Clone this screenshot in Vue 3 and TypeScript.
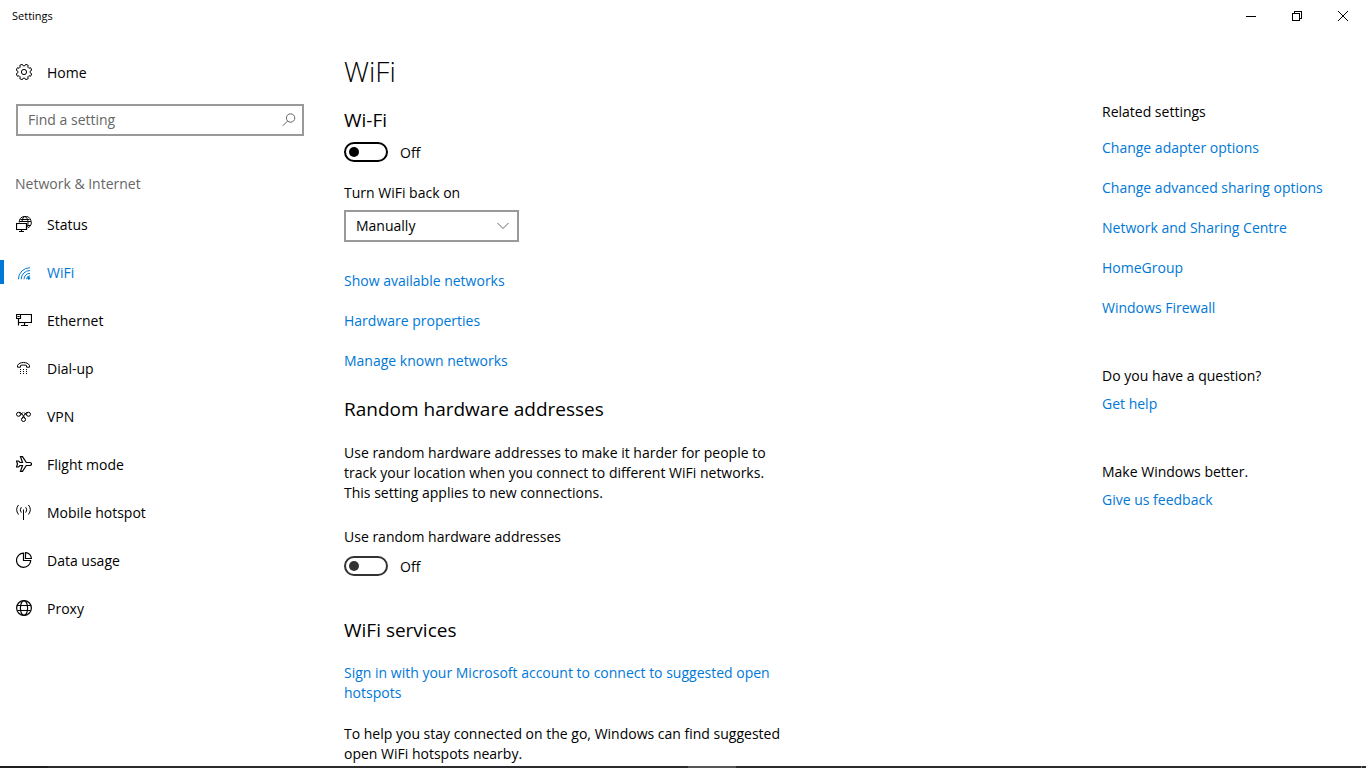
<script setup lang="ts">
import { ref } from 'vue'

interface NavItem {
  id: string
  label: string
}

const navItems: NavItem[] = [
  { id: 'status', label: 'Status' },
  { id: 'wifi', label: 'WiFi' },
  { id: 'ethernet', label: 'Ethernet' },
  { id: 'dialup', label: 'Dial-up' },
  { id: 'vpn', label: 'VPN' },
  { id: 'flight', label: 'Flight mode' },
  { id: 'hotspot', label: 'Mobile hotspot' },
  { id: 'data', label: 'Data usage' },
  { id: 'proxy', label: 'Proxy' },
]

const networkLinks: string[] = ['Show available networks', 'Hardware properties', 'Manage known networks']
const relatedLinks: string[] = [
  'Change adapter options',
  'Change advanced sharing options',
  'Network and Sharing Centre',
  'HomeGroup',
  'Windows Firewall',
]

const active = ref('wifi')
const query = ref('')
const wifiOn = ref(false)
const randomOn = ref(false)
const turnOn = ref('Manually')

// Scalloped outline of the gear, eight teeth around (8, 8)
const gearPoints: string = Array.from({ length: 8 }, (_, i) => {
  const at = (r: number, deg: number) => {
    const a = ((i * 45 + deg + 22.5) * Math.PI) / 180
    return `${(8 + r * Math.cos(a)).toFixed(2)},${(8 + r * Math.sin(a)).toFixed(2)}`
  }
  return [at(7.9, -10), at(7.9, 10), at(6.2, 15), at(6.2, 30)].join(' ')
}).join(' ')
</script>

<template>
  <div class="window">
    <header class="titlebar">
      <span class="title">Settings</span>
      <div class="controls">
        <button type="button" aria-label="Minimise">
          <svg width="10" height="10" viewBox="0 0 10 10" shape-rendering="crispEdges"><path d="M0 5.5H10" /></svg>
        </button>
        <button type="button" aria-label="Restore">
          <svg width="10" height="10" viewBox="0 0 10 10" shape-rendering="crispEdges"><path d="M.5 2.5H7.5V9.5H.5ZM2.5 2.5V.5H9.5V7.5H7.5" /></svg>
        </button>
        <button type="button" aria-label="Close">
          <svg width="10" height="10" viewBox="0 0 10 10"><path d="M0 0 10 10M10 0 0 10" /></svg>
        </button>
      </div>
    </header>

    <div class="body">
      <aside class="sidebar">
        <a class="item" href="#home">
          <svg class="icon" viewBox="0 0 16 16"><polygon :points="gearPoints" stroke-linejoin="round" /><circle cx="8" cy="8" r="2.6" /></svg>
          <span>Home</span>
        </a>
        <div class="search">
          <input v-model="query" type="text" placeholder="Find a setting" aria-label="Find a setting" />
          <svg width="14" height="14" viewBox="0 0 14 14"><circle cx="8.6" cy="5" r="4.2" /><path d="M5.6 8 .8 12.8" /></svg>
        </div>
        <h2 class="group">Network &amp; Internet</h2>
        <nav>
          <a
            v-for="item in navItems"
            :key="item.id"
            class="item"
            :class="{ active: item.id === active }"
            :href="'#' + item.id"
            @click.prevent="active = item.id"
          >
            <svg class="icon" viewBox="0 0 16 16">
              <g v-if="item.id === 'status'">
                <path d="M3.2 6.5A6 6 0 1 1 11.6 11.9M4.5 3.5H13.5M4 5.5H14.8M11.5 9.5H14M6 5.5C6.3 3 7.3.6 8.9.6S12 3.5 12 6.5 11.6 9.6 11.2 11" />
                <path stroke-width="1.2" d="M.5 7.5H10.5V13.5H.5ZM5.5 13.5V15.5M3 15.5H8" />
              </g>
              <g v-else-if="item.id === 'wifi'">
                <path d="M2.4 15.3A11.6 11.6 0 0 1 14 3.7M5.2 15.3A8.8 8.8 0 0 1 14 6.5M8 15.3A6 6 0 0 1 14 9.3M10.6 15.3A3.4 3.4 0 0 1 14 11.9" />
                <circle class="solid" cx="12.8" cy="14.3" r="1" />
              </g>
              <g v-else-if="item.id === 'ethernet'" stroke-width="1.2">
                <path d="M4.5 2.5H15.5V10.5H2.5M8.5 10.5V13.5M5 13.5H12M.5 2.5H4.5V6.5H.5ZM2.5 6.5V13.5M1.5 4.5H3.5" />
              </g>
              <g v-else-if="item.id === 'dialup'">
                <path d="M1.5 7.2V5.5C2.5 3.3 5 2.5 7.5 2.5S12.5 3.3 13.5 5.5V7.2H10.5V5.5C9 4.9 6 4.9 4.5 5.5V7.2Z" />
                <path class="solid flat" d="M4 9h1v1h-1zM7 9h1v1h-1zM10 9h1v1h-1zM4 11h1v1h-1zM7 11h1v1h-1zM10 11h1v1h-1zM4 13h1v1h-1zM7 13h1v1h-1zM10 13h1v1h-1z" />
              </g>
              <g v-else-if="item.id === 'vpn'">
                <circle cx="2.5" cy="6.3" r="2" /><circle cx="12.5" cy="6.3" r="2" /><circle cx="7.5" cy="11.5" r="2" />
                <path d="M3 4.3Q5 4.3 6 6L9.2 10.5M12 4.3Q10 4.3 9 6L5.8 10.5M4.2 7.5 6.8 4.5M10.8 7.5 8.2 4.5" />
              </g>
              <g v-else-if="item.id === 'flight'" stroke-width="1.2">
                <path d="M.5 5H2.5L4 6.5H6.5L4.5.7H6.5L10.3 6.5H14Q15.5 6.7 15.5 8T14 9.5H10.3L6.5 15.3H4.5L6.5 9.5H4L2.5 11H.5L1.5 8Z" />
              </g>
              <g v-else-if="item.id === 'hotspot'">
                <path d="M7.5 5.5V16M5.3 3.2Q3.2 5.8 5.3 8.6M9.7 3.2Q11.8 5.8 9.7 8.6M2.5 1Q-1.2 5.5 2.5 10.5M12.5 1Q16.2 5.5 12.5 10.5" />
              </g>
              <g v-else-if="item.id === 'data'" stroke-width="1.2">
                <path d="M7.5 1.2A7.1 7.1 0 1 0 14.7 8.5H7.5ZM9.5.6V6.5H15.4A6 6 0 0 0 9.5.6Z" />
              </g>
              <g v-else stroke-width="1.2">
                <circle cx="8" cy="8" r="7.4" /><ellipse cx="8" cy="8" rx="3.6" ry="7.4" />
                <path d="M1.5 5.5H14.5M1.5 10.5H14.5" />
              </g>
            </svg>
            <span>{{ item.label }}</span>
          </a>
        </nav>
      </aside>

      <main class="content">
        <h1>WiFi</h1>
        <h2 class="first">Wi-Fi</h2>
        <label class="toggle">
          <input v-model="wifiOn" type="checkbox" aria-label="Wi-Fi" />
          <span>{{ wifiOn ? 'On' : 'Off' }}</span>
        </label>
        <label class="caption" for="turn-on">Turn WiFi back on</label>
        <div class="select">
          <select id="turn-on" v-model="turnOn">
            <option>Manually</option>
            <option>In 1 hour</option>
            <option>In 4 hours</option>
            <option>In 1 day</option>
          </select>
          <svg width="12" height="8" viewBox="0 0 12 8"><path d="M.5 1 6 6.5 11.5 1" /></svg>
        </div>
        <ul class="links">
          <li v-for="link in networkLinks" :key="link"><a href="#">{{ link }}</a></li>
        </ul>
        <h2>Random hardware addresses</h2>
        <p class="text">
          Use random hardware addresses to make it harder for people to track your location when you connect to
          different WiFi networks. This setting applies to new connections.
        </p>
        <label class="caption" for="random-toggle">Use random hardware addresses</label>
        <label class="toggle soft">
          <input id="random-toggle" v-model="randomOn" type="checkbox" />
          <span>{{ randomOn ? 'On' : 'Off' }}</span>
        </label>
        <h2 class="services">WiFi services</h2>
        <p class="signin"><a href="#">Sign in with your Microsoft account to connect to suggested open hotspots</a></p>
        <p class="text">
          To help you stay connected on the go, Windows can find suggested open WiFi hotspots nearby.
        </p>
      </main>

      <aside class="related">
        <h3>Related settings</h3>
        <ul class="links">
          <li v-for="link in relatedLinks" :key="link"><a href="#">{{ link }}</a></li>
        </ul>
        <h3>Do you have a question?</h3>
        <p><a href="#">Get help</a></p>
        <h3>Make Windows better.</h3>
        <p><a href="#">Give us feedback</a></p>
      </aside>
    </div>

    <footer class="edge"><i class="start"></i><i class="running"></i><i class="desk"></i></footer>
  </div>
</template>

<style>
body {
  margin: 0;
  overflow: hidden;
}
</style>

<style scoped>
.window {
  display: flex;
  flex-direction: column;
  height: 100vh;
  overflow: hidden;
  background: #fff;
  color: #000;
  font: 14px/20px "Segoe UI", "Open Sans", "Noto Sans", sans-serif;
}
h1, h2, h3, p, ul {
  margin: 0;
  padding: 0;
  font-size: 14px;
  font-weight: 400;
}
ul {
  list-style: none;
}
a {
  color: #0078d7;
  text-decoration: none;
}
svg {
  fill: none;
  stroke: currentColor;
}
.titlebar {
  display: flex;
  flex: none;
  justify-content: space-between;
  height: 32px;
}
.title {
  padding-left: 12px;
  font-size: 11px;
  line-height: 32px;
}
.controls {
  display: flex;
}
.controls button {
  display: grid;
  place-items: center;
  width: 46px;
  padding: 0;
  border: 0;
  background: none;
  color: #000;
}
.body {
  display: flex;
  flex: 1;
  min-height: 0;
  overflow: hidden;
}
.sidebar {
  flex: none;
  width: 320px;
  padding-top: 16px;
}
.item {
  display: flex;
  align-items: center;
  gap: 15px;
  height: 48px;
  box-sizing: border-box;
  padding-left: 16px;
  color: #000;
}
.item span {
  padding-top: 2px;
}
.icon {
  width: 16px;
  height: 16px;
}
.item.active {
  padding-left: 12px;
  color: #0078d7;
}
.item.active::before {
  content: "";
  width: 4px;
  height: 24px;
  margin: 0 -3px 0 -12px;
  background: #0078d7;
}
.solid {
  fill: currentColor;
}
.flat {
  stroke: none;
}
.search {
  display: flex;
  align-items: center;
  height: 32px;
  margin: 8px 16px 0;
  padding-right: 6px;
  box-sizing: border-box;
  border: 2px solid #999;
  color: #666;
}
.search input {
  flex: 1;
  min-width: 0;
  padding: 0 10px;
  border: 0;
  outline: 0;
  background: none;
  font: inherit;
  color: #000;
}
.search input::placeholder {
  color: #666;
  opacity: 1;
}
.group {
  margin: 38px 0 6px 15px;
  color: #666;
}
.content {
  flex: 0 1 448px;
  margin: 25px auto 0 24px;
}
h1 {
  font-size: 28px;
  font-weight: 300;
  line-height: 28px;
}
.content h2 {
  margin-top: 24px;
  font-size: 19px;
  line-height: 28px;
}
.content h2.first {
  margin-top: 21px;
}
.toggle {
  display: flex;
  align-items: center;
  gap: 12px;
  height: 20px;
  margin-top: 8px;
}
.toggle span {
  padding-top: 2px;
}
.toggle input {
  display: flex;
  align-items: center;
  width: 44px;
  height: 20px;
  margin: 0;
  box-sizing: border-box;
  padding: 0 3px;
  appearance: none;
  border: 2px solid #000;
  border-radius: 10px;
}
.toggle input::before {
  content: "";
  width: 10px;
  height: 10px;
  border-radius: 50%;
  background: #000;
}
.toggle input:checked {
  justify-content: flex-end;
}
.toggle.soft input {
  border-color: #333;
}
.toggle.soft input::before {
  background: #333;
}
.caption {
  display: block;
  margin-top: 21px;
}
.select {
  display: grid;
  align-items: center;
  width: 175px;
  height: 32px;
  margin-top: 7px;
  color: #666;
}
.select select, .select svg {
  grid-area: 1 / 1;
}
.select select {
  width: 100%;
  height: 32px;
  padding: 0 10px;
  appearance: none;
  border: 2px solid #999;
  border-radius: 0;
  background: #fff;
  font: inherit;
  color: #000;
}
.select svg {
  justify-self: end;
  margin-right: 10px;
  pointer-events: none;
}
.links {
  display: grid;
  gap: 20px;
}
.content .links {
  margin-top: 29px;
}
.text {
  margin-top: 20px;
}
.text + .caption {
  margin-top: 24px;
}
.caption + .toggle {
  margin-top: 9px;
}
.content h2.services {
  margin-top: 40px;
}
.signin {
  margin-top: 19px;
}
.signin + .text {
  margin-top: 21px;
}
.related {
  flex: none;
  width: 264px;
  margin-top: 70px;
}
.related .links {
  margin: 16px 0 48px;
}
.related p {
  margin: 8px 0 48px;
}
.edge {
  display: flex;
  flex: none;
  height: 2px;
  background: #2b2b2d;
}
.start {
  width: 48px;
  background: #1f1f21;
}
.running {
  width: 48px;
  margin-left: 640px;
  background: #555;
}
.desk {
  width: 1px;
  margin: 0 4px 0 auto;
  background: #777;
}
</style>
